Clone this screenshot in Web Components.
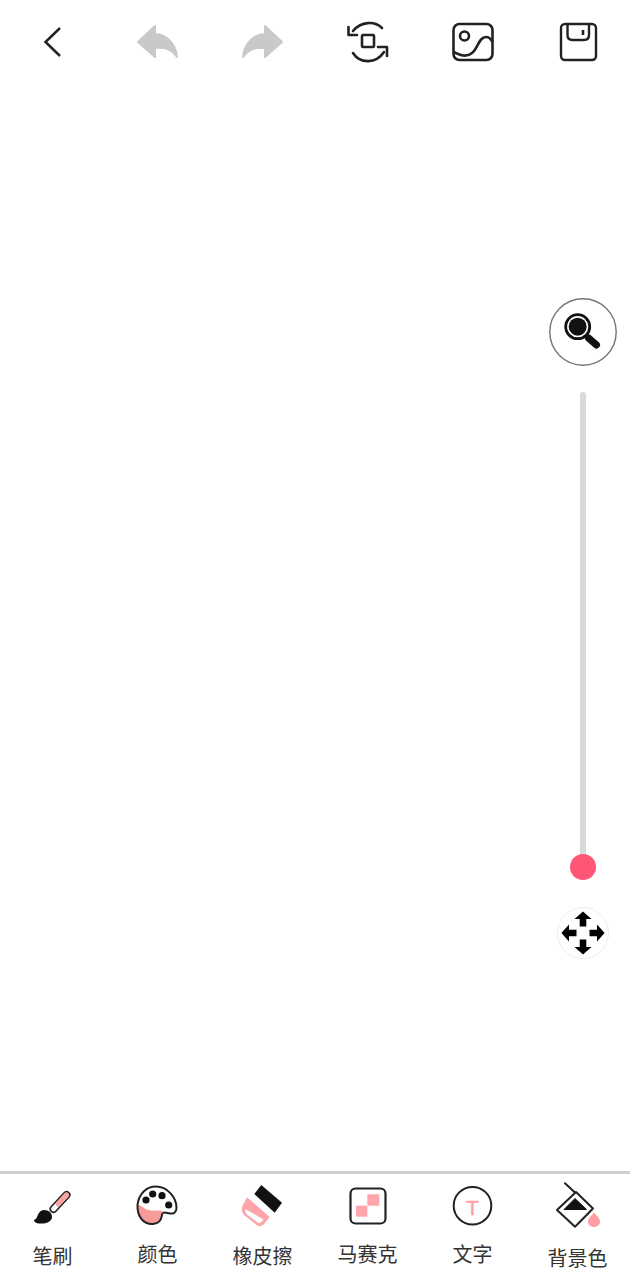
<!DOCTYPE html>
<html lang="zh">
<head>
<meta charset="utf-8">
<title>涂鸦</title>
<style>
  html, body { margin: 0; height: 100%; background: #fff; }
  body { font-family: "Noto Sans CJK SC", "Noto Sans", sans-serif; }
</style>
</head>
<body>
<paint-screen>
  <top-bar slot="top">
    <bar-icon>
      <svg viewBox="0 0 48 48" fill="none" stroke="#222" stroke-width="2.5" stroke-linejoin="miter"><path d="M32 10 17.5 24 32 38"/></svg>
    </bar-icon>
    <bar-icon>
      <svg viewBox="0 0 48 48" fill="#c9c9c9" stroke="#c9c9c9" stroke-width="2" stroke-linejoin="round"><path d="M5 24 22 8V16C34 16 43 27 44 39 38 31 32 29 22 30V39Z"/></svg>
    </bar-icon>
    <bar-icon>
      <svg viewBox="0 0 48 48" fill="#c9c9c9" stroke="#c9c9c9" stroke-width="2" stroke-linejoin="round"><path d="M44 24 27 8V16C15 16 6 27 5 39 11 31 17 29 27 30V39Z"/></svg>
    </bar-icon>
    <bar-icon>
      <svg viewBox="0 0 48 48" fill="none" stroke="#222" stroke-width="2.6" stroke-linecap="round" stroke-linejoin="round"><rect x="19" y="17" width="12" height="12" rx="1"/><path d="M39 10C32 3 18 3 10 13"/><path d="M5.500 9V17H14"/><path d="M10 35C17 46 33 46 41 34"/><path d="M35 29H44V38"/></svg>
    </bar-icon>
    <bar-icon>
      <svg viewBox="0 0 48 48" fill="none" stroke="#222" stroke-width="2.6"><rect x="5.500" y="6" width="39" height="36" rx="6"/><circle cx="16.500" cy="18" r="4.500"/><path d="M5.500 34C12 37 18 40 24 35 30 30 31 19 38 19 41 19 43 21 44.500 24"/></svg>
    </bar-icon>
    <bar-icon>
      <svg viewBox="0 0 48 48" fill="none" stroke="#222" stroke-width="2.400"><rect x="8" y="6" width="35" height="36" rx="4"/><path d="M14.500 6V17Q14.500 22 19.500 22H31Q36 22 36 17V6"/><path d="M30 12V17" stroke-width="2.600"/></svg>
    </bar-icon>
  </top-bar>

  <side-rail slot="side"></side-rail>

  <tool-bar slot="bottom">
    <tool-item label="笔刷" style="--label-gap:6px">
      <svg viewBox="0 0 60 60" fill="none">
        <path d="M44.500 19 31.500 33" stroke="#222" stroke-width="8" stroke-linecap="round"/>
        <path d="M44.500 19 31.500 33" stroke="#fff" stroke-width="4.800" stroke-linecap="round"/>
        <path d="M44.500 19 36 28" stroke="#f9a3a3" stroke-width="5" stroke-linecap="round"/>
        <path d="M22 34C27 34 30 37 30 41 30 46 23 48 18 47.500 14.500 47.500 12 46 12 44 15 43 15 40 17 37 18 35 20 34 22 34Z" fill="#111"/>
      </svg>
    </tool-item>
    <tool-item label="颜色" style="--label-gap:4px">
      <svg viewBox="0 0 60 60" fill="none">
        <path d="M10.500 29C12 17 20 10.500 29 10.500 40 10.500 49.500 21 49.500 32 49.500 37 46 38 43 37.500 39 37 35.500 35 35 39 34.500 44 32 47.500 26 48 16 48.500 10 40 10.500 29Z" fill="#fff"/>
        <path d="M11 29C15 29 17 34 24 34.500 29 35 32 34 35.500 35 35.200 36 35 37 35 39 34.500 44 32 47.500 26 48 16 48.500 10 40 11 29Z" fill="#f79a9a"/>
        <path d="M10.500 29C12 17 20 10.500 29 10.500 40 10.500 49.500 21 49.500 32 49.500 37 46 38 43 37.500 39 37 35.500 35 35 39 34.500 44 32 47.500 26 48 16 48.500 10 40 10.500 29Z" stroke="#222" stroke-width="2"/>
        <g fill="#111"><circle cx="19" cy="24" r="3.600"/><circle cx="25.700" cy="18" r="3.600"/><circle cx="35" cy="19.700" r="3.600"/><circle cx="41.700" cy="29" r="3.600"/></g>
      </svg>
    </tool-item>
    <tool-item label="橡皮擦" style="--label-gap:6px">
      <svg viewBox="0 0 60 60" fill="none">
        <path d="M29.300 9 50 26.700 42.700 36.700 22.300 18Z" fill="#111"/>
        <path d="M15 21.300 37.700 41 31.500 48.500Q28 51.500 24.500 49L12 39Q8.500 35 10.500 30Z" fill="#ffa5a8"/>
        <path d="M13.500 33 31.500 43.500 29 46.500Q27.500 47.500 25.500 46.500L15 38.500Q12.800 36 13.500 33Z" fill="#fff"/>
      </svg>
    </tool-item>
    <tool-item label="马赛克" style="--label-gap:4px">
      <svg viewBox="0 0 60 60" fill="none">
        <rect x="13.500" y="12.500" width="35" height="35" rx="5" stroke="#222" stroke-width="2.200"/>
        <rect x="30.300" y="18.300" width="12" height="11.400" fill="#ffa5ab"/>
        <rect x="19" y="29.700" width="11.300" height="11" fill="#ffa5ab"/>
      </svg>
    </tool-item>
    <tool-item label="文字" style="--label-gap:4px">
      <svg viewBox="0 0 60 60" fill="none">
        <circle cx="30.500" cy="29.700" r="18.800" stroke="#222" stroke-width="2"/>
        <text x="30.500" y="38.500" text-anchor="middle" font-family="Liberation Sans" font-size="21" fill="#ffa0a5" stroke="#ffa0a5" stroke-width=".5">T</text>
      </svg>
    </tool-item>
    <tool-item label="背景色" style="--label-gap:8px">
      <svg viewBox="0 0 60 60" fill="none">
        <path d="M18 7.300 43.500 31" stroke="#222" stroke-width="2" stroke-linecap="round"/>
        <path d="M29 16 46 32.500 28 50.700 10 34Z" fill="#fff" stroke="#222" stroke-width="2" stroke-linejoin="round"/>
        <path d="M17 33.500 28 22.500 39.500 33.500Z" fill="#111" stroke="#111" stroke-linejoin="round"/>
        <path d="M47 36.300C49 39.500 53 42 53 45.500 53 48.700 50.300 51 47 51 43.700 51 41 48.700 41 45.500 41 42 45 39.500 47 36.300Z" fill="#ff9ea3"/>
      </svg>
    </tool-item>
  </tool-bar>
</paint-screen>

<script>
function makeTemplate(html) {
  const t = document.createElement('template');
  t.innerHTML = html;
  return t;
}

class Base extends HTMLElement {
  constructor() {
    super();
    this.attachShadow({ mode: 'open' });
    this.shadowRoot.appendChild(this.constructor.template.content.cloneNode(true));
  }
}

class PaintScreen extends Base {
  static template = makeTemplate(`
    <style>
      :host { display: flex; flex-direction: column; height: 1280px; overflow: hidden; background: #fff; }
      .canvas { flex: 1; display: flex; justify-content: flex-end; min-height: 0; }
    </style>
    <slot name="top"></slot>
    <div class="canvas"><slot name="side"></slot></div>
    <slot name="bottom"></slot>
  `);
}

class TopBar extends Base {
  static template = makeTemplate(`
    <style>
      :host { display: grid; grid-template-columns: repeat(6, 105px); height: 84px; align-items: center; }
    </style>
    <slot></slot>
  `);
}

class BarIcon extends Base {
  static template = makeTemplate(`
    <style>
      :host { display: flex; justify-content: center; align-items: center; height: 84px; }
      ::slotted(svg) { width: 48px; height: 48px; display: block; margin-right: 1px; }
    </style>
    <slot></slot>
  `);
}

class SideRail extends Base {
  static template = makeTemplate(`
    <style>
      :host { display: flex; flex-direction: column; align-items: center; width: 68px; margin-right: 13px; padding-top: 214px; }
      svg { display: block; }
      .track { position: relative; width: 6px; height: 475px; margin-top: 26px; background: #d9d9d9; border-radius: 3px 3px 0 0; }
      .knob { position: absolute; left: -10px; bottom: -13px; width: 26px; height: 26px; border-radius: 50%; background: #ff5577; }
      .move { margin-top: 40px; width: 52px; height: 52px; border: 1px solid #eee; border-radius: 50%; box-sizing: border-box; }
    </style>
    <svg width="68" height="68" viewBox="0 0 68 68" fill="none">
      <circle cx="34" cy="34" r="33.200" stroke="#777" stroke-width="1.400"/>
      <circle cx="28.700" cy="28.700" r="12" stroke="#111" stroke-width="2.800"/>
      <circle cx="28.700" cy="28.700" r="9" fill="#111"/>
      <path d="M39.500 40 47.500 47" stroke="#111" stroke-width="7" stroke-linecap="round"/>
      <path d="M37 37 41 41" stroke="#111" stroke-width="3"/>
    </svg>
    <div class="track"><div class="knob"></div></div>
    <svg class="move" viewBox="0 0 50 50" fill="#000">
      <path d="M25 3.400 33.500 11H28.300V18.500H21.700V11H16.500Z"/>
      <path d="M25 46.600 33.500 39H28.300V31.500H21.700V39H16.500Z"/>
      <path d="M3.400 25 11 16.500V21.700H18.500V28.300H11V33.500Z"/>
      <path d="M46.600 25 39 16.500V21.700H31.500V28.300H39V33.500Z"/>
    </svg>
  `);
}

class ToolBar extends Base {
  static template = makeTemplate(`
    <style>
      :host { display: grid; grid-template-columns: repeat(6, 105px); height: 109px; box-sizing: border-box; border-top: 3px solid #cfcfcf; padding-top: 2px; align-items: start; }
    </style>
    <slot></slot>
  `);
}

class ToolItem extends Base {
  static template = makeTemplate(`
    <style>
      :host { display: flex; flex-direction: column; align-items: center; }
      ::slotted(svg) { width: 60px; height: 60px; display: block; margin-right: 1px; }
      .label { margin-top: var(--label-gap, 4px); font: 20px/28px "Noto Sans CJK SC", "Noto Sans", sans-serif; color: #333; white-space: nowrap; }
    </style>
    <slot></slot>
    <span class="label"></span>
  `);
  connectedCallback() {
    this.shadowRoot.querySelector('.label').textContent = this.getAttribute('label');
  }
}

customElements.define('paint-screen', PaintScreen);
customElements.define('top-bar', TopBar);
customElements.define('bar-icon', BarIcon);
customElements.define('side-rail', SideRail);
customElements.define('tool-bar', ToolBar);
customElements.define('tool-item', ToolItem);
</script>
</body>
</html>
